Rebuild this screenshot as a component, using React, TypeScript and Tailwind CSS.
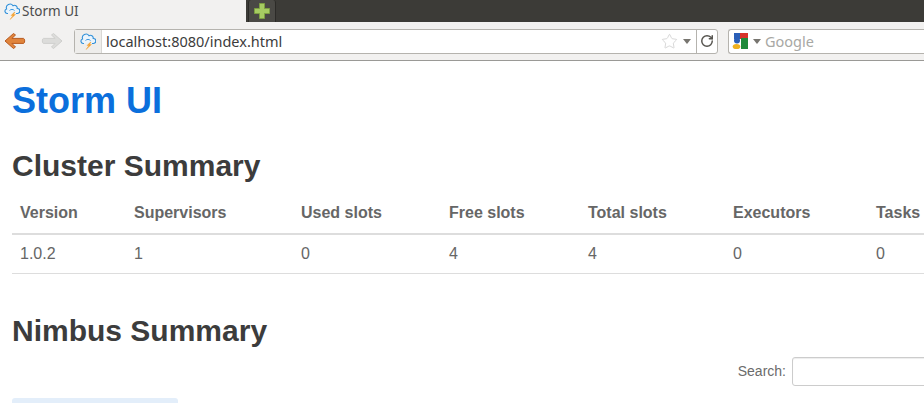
import { Star, RotateCw } from "lucide-react"

const ui = "font-['Noto_Sans','Open_Sans',sans-serif]"

const columns = [
  { name: "Version", value: "1.0.2", width: "w-[114px]" },
  { name: "Supervisors", value: "1", width: "w-[167px]" },
  { name: "Used slots", value: "0", width: "w-[148px]" },
  { name: "Free slots", value: "4", width: "w-[139px]" },
  { name: "Total slots", value: "4", width: "w-[145px]" },
  { name: "Executors", value: "0", width: "w-[143px]" },
  { name: "Tasks", value: "0", width: "w-[60px]" },
]

function StormIcon() {
  return (
    <svg width="16" height="17" viewBox="0 0 16 17" fill="none" className="shrink-0">
      <path
        d="M4 10.500H3a2.300 2.300 0 0 1-.4-4.500A3.600 3.600 0 0 1 9 2.800a2.700 2.700 0 0 1 4.200 2.700 2.500 2.500 0 0 1 .3 5H12"
        fill="#eaf4fc"
        stroke="#2f8fd8"
        strokeWidth="1.100"
      />
      <path d="M5.500 7.500c1.500-1.500 3.500-1.500 5 0" stroke="#2f8fd8" strokeWidth="0.900" />
      <path
        d="M10.500 9 7 12.500h2L6 16.500l5.500-5H9.500l1.500-2.500z"
        fill="#f5a02a"
        stroke="#f5a02a"
        strokeWidth="0.400"
      />
    </svg>
  )
}

function BackArrow() {
  return (
    <svg width="24" height="20" viewBox="0 0 24 20">
      <path
        d="M10.500 2.500 2 10l8.500 7.500 2-1.500-3.600-3.600h11.600c1.600 0 1.600-5 0-5H8.900L12.500 4z"
        fill="#e0843c"
        stroke="#b85a20"
        strokeWidth="1"
      />
    </svg>
  )
}

function ForwardArrow() {
  return (
    <svg width="24" height="20" viewBox="0 0 24 20">
      <path
        d="M13.500 2.500 22 10l-8.500 7.500-2-1.500 3.600-3.600H3.500c-1.600 0-1.600-5 0-5h11.600L11.500 4z"
        fill="#dcdcda"
        stroke="#cfcfcd"
        strokeWidth="1"
      />
    </svg>
  )
}

function NewTabIcon() {
  return (
    <svg width="16" height="16" viewBox="0 0 16 16">
      <path
        d="M5.500.5h5v5h5v5h-5v5h-5v-5h-5v-5h5z"
        fill="#a6cc62"
        stroke="#7d9f42"
        strokeWidth="1"
      />
    </svg>
  )
}

function GoogleIcon() {
  return (
    <svg width="17" height="17" viewBox="0 0 17 17" className="shrink-0">
      <rect x="2" y="0" width="6" height="6" fill="#2a5fb8" />
      <rect x="8" y="0" width="8" height="6" fill="#d8342a" />
      <rect x="9" y="5" width="7" height="11" fill="#1f8a3a" />
      <circle cx="5" cy="7.500" r="3" fill="#2a5fb8" />
      <ellipse cx="4.500" cy="13.500" rx="3.800" ry="2.600" fill="#eeb020" />
    </svg>
  )
}

function Caret() {
  return <span className="h-0 w-0 border-x-[4px] border-t-[5px] border-x-transparent border-t-[#77756f]" />
}

function BrowserChrome() {
  return (
    <div className={ui}>
      {/* Tab strip */}
      <div className="flex h-[22px] bg-[#3c3b37]">
        <div className="flex w-[246px] items-center gap-[2px] bg-[#f2f1f0] pl-1 text-[13.500px] text-[#4c4c4c]">
          <StormIcon />
          <span>Storm UI</span>
        </div>
        <div className="ml-[2px] flex w-[28px] items-center justify-center rounded-t-[3px] border-x border-[#2c2b28] bg-[#4a4945]">
          <NewTabIcon />
        </div>
      </div>

      {/* Toolbar */}
      <div className="flex h-[39px] items-center border-b border-[#9a9996] bg-[#f2f1f0]">
        <div className="ml-[3px] flex w-[71px] gap-[13px]">
          <BackArrow />
          <ForwardArrow />
        </div>
        <div className="flex h-[25px] w-[644px] items-center rounded-[3px] border border-[#b5b3ae] bg-white">
          <div className="flex h-full w-[27px] items-center justify-center border-r border-[#d8d7d4] bg-[#eeedeb]">
            <StormIcon />
          </div>
          <span className="ml-1 flex-1 pt-[1px] text-[14.500px] text-[#3c3c3c]">localhost:8080/index.html</span>
          <Star size={17} strokeWidth={1} className="text-[#c8c8c8]" />
          <span className="mx-[5px] flex">
            <Caret />
          </span>
          <div className="flex h-full w-[21px] items-center justify-center border-l border-[#b5b3ae]">
            <RotateCw size={14} strokeWidth={2.500} className="text-[#55534e]" />
          </div>
        </div>
        <div className="ml-[10px] flex h-[25px] flex-1 items-center gap-[4px] rounded-l-[3px] border border-r-0 border-[#b5b3ae] bg-white pl-[3px]">
          <GoogleIcon />
          <Caret />
          <span className="pt-[1px] text-[14.500px] text-[#a8a8a4]">Google</span>
        </div>
      </div>
    </div>
  )
}

export default function App() {
  return (
    <div className="h-[403px] w-[924px] overflow-hidden bg-white font-['Liberation_Sans',Arial,sans-serif]">
      <BrowserChrome />

      <div className="w-[940px] pl-3">
        <h1 className="mt-[19px] text-[36px] leading-[42px] font-bold text-[#0b6fdc]">Storm UI</h1>
        <h2 className="mt-[27px] text-[30px] leading-[33px] font-bold text-[#3c3c3c]">Cluster Summary</h2>

        <table className="mt-[13px] table-fixed border-collapse text-[16px] leading-[20px] text-[#666666]">
          <thead>
            <tr className="border-b-2 border-[#dddddd]">
              {columns.map((c) => (
                <th key={c.name} className={`${c.width} px-2 pt-[8px] pb-[10px] text-left font-bold`}>
                  {c.name}
                </th>
              ))}
            </tr>
          </thead>
          <tbody>
            <tr className="border-b border-[#dddddd]">
              {columns.map((c) => (
                <td key={c.name} className="px-2 py-[9px] text-left">
                  {c.value}
                </td>
              ))}
            </tr>
          </tbody>
        </table>

        <h2 className="mt-[40px] text-[30px] leading-[33px] font-bold text-[#3c3c3c]">Nimbus Summary</h2>

        <div className="mt-[10px] flex items-center justify-end gap-[6px] text-[14px] text-[#6b6b6b]">
          <label>Search:</label>
          <input className="h-[29px] w-[148px] rounded-[3px] border border-[#cccccc] bg-white shadow-[inset_0_1px_1px_rgba(0,0,0,0.075)]" />
        </div>

        <div className="mt-[12px] h-[20px] w-[166px] rounded-[3px] bg-[#e3eefa]" />
      </div>
    </div>
  )
}
